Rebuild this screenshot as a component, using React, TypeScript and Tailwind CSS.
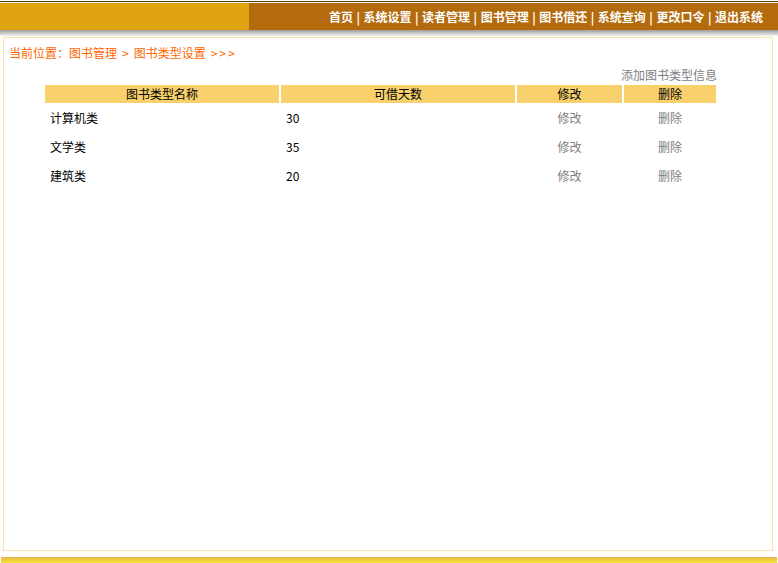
const navItems = ['首页', '系统设置', '读者管理', '图书管理', '图书借还', '系统查询', '更改口令', '退出系统']

const bookTypes = [
  { name: '计算机类', days: 30 },
  { name: '文学类', days: 35 },
  { name: '建筑类', days: 20 },
]

export default function App() {
  return (
    <div
      className="w-[778px] h-[563px] bg-white text-[12px] overflow-hidden"
      style={{ fontFamily: '"Noto Sans CJK SC", "Microsoft YaHei", sans-serif' }}
    >
      {/* Top rule */}
      <div className="h-px bg-white" />
      <div className="h-px bg-[#5c3a0c]" />
      <div className="h-px bg-white" />

      {/* Header */}
      <div className="flex h-[27px]">
        <div className="w-[249px] bg-[#e0a410]" />
        <div className="flex-1 bg-[#b36b0e] flex items-center justify-end pr-[15px] text-white font-bold">
          {navItems.map((item, i) => (
            <span key={item} className="flex items-center">
              {i > 0 && <span className="mx-[3.5px]">|</span>}
              {item}
            </span>
          ))}
        </div>
      </div>
      <div className="h-[6px] bg-gradient-to-b from-[#9c9c9c] to-[#f4f4f4]" />
      <div className="h-px" />

      {/* Content */}
      <div className="ml-[3px] w-[770px] h-[514px] border border-[#fbe2a6]">
        <div className="pt-[7px] pl-[5px] text-[#ff6600] leading-[16px] flex items-center">
          <span>当前位置：图书管理</span>
          <span className="mx-[5px]">&gt;</span>
          <span>图书类型设置</span>
          <span className="ml-[5px] tracking-[2px]">&gt;&gt;&gt;</span>
        </div>

        <div className="ml-[41px] w-[672px] mt-[6px]">
          <div className="text-right text-[#7e7e86] leading-[16px]">添加图书类型信息</div>

          <div className="mt-[2px] flex gap-[2px] h-[18px] leading-[18px] text-black text-center">
            <div className="w-[234px] bg-[#f8d06c]">图书类型名称</div>
            <div className="w-[234px] bg-[#f8d06c]">可借天数</div>
            <div className="w-[105px] bg-[#f8d06c]">修改</div>
            <div className="w-[92px] bg-[#f8d06c]">删除</div>
          </div>

          {bookTypes.map((t) => (
            <div key={t.name} className="mt-px flex gap-[2px] h-[28px] items-center">
              <div className="w-[234px] pl-[5px] text-black">{t.name}</div>
              <div className="w-[234px] pl-[5px] text-black">{t.days}</div>
              <div className="w-[105px] text-center text-[#808080]">修改</div>
              <div className="w-[92px] text-center text-[#808080]">删除</div>
            </div>
          ))}
        </div>
      </div>

      {/* Footer bar */}
      <div className="h-[6px]" />
      <div className="mx-px h-[6px] bg-gradient-to-b from-[#e6b64a] to-[#f6e22c]" />
    </div>
  )
}
